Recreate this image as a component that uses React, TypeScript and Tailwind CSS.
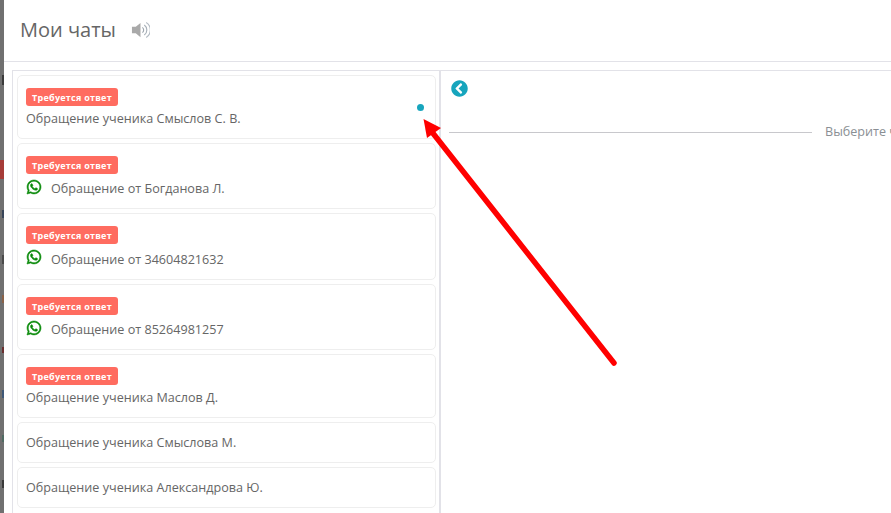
import { FaWhatsapp, FaChevronCircleLeft } from "react-icons/fa";

const font = "font-['Open_Sans',sans-serif]";

function Badge() {
  return (
    <div className="flex h-[18px] w-[92px] items-center justify-center rounded-[3px] bg-[#ff6c60] text-[9px] font-bold leading-none tracking-[0.25px] text-white">
      Требуется ответ
    </div>
  );
}

type Chat = { title: string; badge?: boolean; wa?: boolean; h: string; dot?: boolean; low?: boolean };

const chats: Chat[] = [
  { title: "Обращение ученика Смыслов С. В.", badge: true, h: "h-[64px]", dot: true },
  { title: "Обращение от Богданова Л.", badge: true, wa: true, h: "h-[66px]" },
  { title: "Обращение от 34604821632", badge: true, wa: true, h: "h-[67px]", low: true },
  { title: "Обращение от 85264981257", badge: true, wa: true, h: "h-[66px]" },
  { title: "Обращение ученика Маслов Д.", badge: true, h: "h-[64px]" },
  { title: "Обращение ученика Смыслова М.", h: "h-[41px]" },
  { title: "Обращение ученика Александрова Ю.", h: "h-[41px]" },
];

function Card({ c }: { c: Chat }) {
  return (
    <div className={`relative flex shrink-0 flex-col rounded-[5px] border border-[#eeeeee] bg-white pl-2 ${c.h} ${c.badge ? "pt-3" : "justify-center"}`}>
      {c.badge && <Badge />}
      {c.wa ? (
        <div className={`flex items-center ${c.low ? "mt-[4px]" : "mt-[3px]"}`}>
          <FaWhatsapp className={`h-4 w-4 text-[#078907] ${c.low ? "mb-[6px]" : "mb-[5px]"}`} stroke="currentColor" strokeWidth={18} />
          <span className="ml-[9px] text-[12.6px] leading-[24px] text-[#666666]">{c.title}</span>
        </div>
      ) : (
        <div className={`text-[12.6px] leading-[22px] text-[#666666] ${c.badge ? "mt-[2px]" : ""}`}>{c.title}</div>
      )}
      {c.dot && <div className="absolute right-[11px] top-[28px] h-[7px] w-[7px] rounded-full bg-[#17a5bd]" />}
    </div>
  );
}

const slivers = [
  { h: "h-[10px]", mt: "mt-[75px]", c: "bg-[#3a3a3a]" },
  { h: "h-[19px]", mt: "mt-[75px]", c: "bg-[#a63c38]" },
  { h: "h-[8px]", mt: "mt-[31px]", c: "bg-[#39465a]" },
  { h: "h-[9px]", mt: "mt-[37px]", c: "bg-[#4a4a4a]" },
  { h: "h-[8px]", mt: "mt-[31px]", c: "bg-[#8a6248]" },
  { h: "h-[6px]", mt: "mt-[44px]", c: "bg-[#6b2f2f]" },
  { h: "h-[8px]", mt: "mt-[37px]", c: "bg-[#3f5878]" },
  { h: "h-[7px]", mt: "mt-[37px]", c: "bg-[#4f6a62]" },
  { h: "h-[8px]", mt: "mt-[38px]", c: "bg-[#3a3a3a]" },
];

export default function App() {
  return (
    <div className={`relative flex h-[513px] w-[891px] overflow-hidden bg-white ${font}`}>
      <div className="flex w-1 shrink-0 flex-col items-end overflow-hidden bg-[#707070]">
        {slivers.map((s, i) => (
          <div key={i} className={`shrink-0 ${s.h} ${s.mt} ${s.c} ${s.c === "bg-[#a63c38]" ? "w-1" : "w-[2px]"}`} />
        ))}
      </div>
      <div className="flex min-w-0 flex-1 flex-col">
        <header className="flex h-[62px] shrink-0 items-center border-b border-[#e2e2e8] pb-[2px] pl-[16px]">
          <h1 className="text-[20px] font-normal leading-none text-[#666666]">Мои чаты</h1>
          <svg className="ml-[15px]" width="19" height="18" viewBox="0 0 20 18" fill="none">
            <polygon points="1,5.5 5,5.5 10,1.5 10,16.5 5,12.5 1,12.5" fill="#a9a9a9" />
            <path d="M12,6.2 A3.6,3.6 0 0 1 12,11.8" stroke="#9ea6ae" strokeWidth="1.2" />
            <path d="M14,3.8 A6.4,6.4 0 0 1 14,14.2" stroke="#a7b0b8" strokeWidth="1.2" />
            <path d="M16,1.2 A9.2,9.2 0 0 1 16,16.8" stroke="#b4bcc4" strokeWidth="1.2" />
          </svg>
        </header>
        <div className="ml-2 mt-2 flex min-h-0 flex-1 border-l border-t border-[#e2e2e8]">
          <div className="flex w-[428px] shrink-0 flex-col gap-1 border-r-2 border-[#e2e2e8] pl-1 pr-[3px] pt-1">
            {chats.map((c) => (
              <Card key={c.title} c={c} />
            ))}
          </div>
          <div className="min-w-0 flex-1 pl-2 pt-[9px]">
            <FaChevronCircleLeft className="ml-[2px] h-[17px] w-[17px] text-[#17a5bd]" />
            <div className="mt-[29px] flex items-center whitespace-nowrap">
              <div className="h-px w-[363px] shrink-0 bg-[#c8c8cc]" />
              <span className="ml-[13px] text-[12.6px] leading-none text-[#8a8f94]">Выберите чат</span>
            </div>
          </div>
        </div>
      </div>
      <svg className="pointer-events-none absolute left-0 top-0" width="891" height="513" viewBox="0 0 891 513">
        <line x1="614" y1="363" x2="432" y2="132" stroke="#ff0000" strokeWidth="5.5" strokeLinecap="round" />
        <polygon points="423.5,119 441,128 427,138" fill="#ff0000" />
      </svg>
    </div>
  );
}
